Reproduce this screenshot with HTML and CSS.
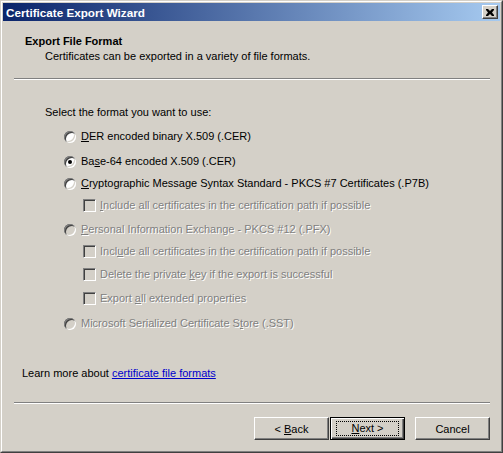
FILE: index.html
```html
<!DOCTYPE html>
<html>
<head>
<meta charset="utf-8">
<link rel="stylesheet" href="styles.css">
</head>
<body>
<div class="win">
  <div class="frame">
    <div class="titlebar">
      <span class="title">Certificate Export Wizard</span>
      <span class="close"><svg width="8" height="7" viewBox="0 0 8 7"><path d="M0 0h2l2 2 2-2h2v1l-2 2.5 2 2.5v1h-2l-2-2-2 2h-2v-1l2-2.5-2-2.5z" fill="#000"/></svg></span>
    </div>
    <div class="header">
      <div class="h-title">Export File Format</div>
      <div class="h-sub">Certificates can be exported in a variety of file formats.</div>
    </div>
    <div class="sep sep1"></div>
    <div class="body">
      <div class="prompt">Select the format you want to use:</div>
      <div class="opt radio r1">
        <span class="rb"></span><span class="lbl"><u>D</u>ER encoded binary X.509 (.CER)</span>
      </div>
      <div class="opt radio r2">
        <span class="rb checked"></span><span class="lbl">Ba<u>s</u>e-64 encoded X.509 (.CER)</span>
      </div>
      <div class="opt radio r3">
        <span class="rb"></span><span class="lbl"><u>C</u>ryptographic Message Syntax Standard - PKCS #7 Certificates (.P7B)</span>
      </div>
      <div class="opt check dis r4">
        <span class="cb"></span><span class="lbl"><u>I</u>nclude all certificates in the certification path if possible</span>
      </div>
      <div class="opt radio dis r5">
        <span class="rb"></span><span class="lbl"><u>P</u>ersonal Information Exchange - PKCS #12 (.PFX)</span>
      </div>
      <div class="opt check dis r6">
        <span class="cb"></span><span class="lbl">Incl<u>u</u>de all certificates in the certification path if possible</span>
      </div>
      <div class="opt check dis r7">
        <span class="cb"></span><span class="lbl">Delete the private <u>k</u>ey if the export is successful</span>
      </div>
      <div class="opt check dis r8">
        <span class="cb"></span><span class="lbl">Export <u>a</u>ll extended properties</span>
      </div>
      <div class="opt radio dis r9">
        <span class="rb"></span><span class="lbl">Microsoft Serialized Certificate S<u>t</u>ore (.SST)</span>
      </div>
      <div class="learn">Learn more about <a href="#">certificate file formats</a></div>
    </div>
    <div class="sep sep2"></div>
    <div class="buttons">
      <button class="btn">&lt; <u>B</u>ack</button>
      <button class="btn def"><span class="focus"><u>N</u>ext &gt;</span></button>
      <button class="btn cancel">Cancel</button>
    </div>
  </div>
</div>
</body>
</html>
```
FILE: styles.css
```css
* { box-sizing: border-box; }
html, body { margin: 0; padding: 0; background: #d4d0c8; }
body { font-family: "Liberation Sans", Arial, sans-serif; font-size: 11px; color: #000; }
.win {
  width: 503px; height: 453px;
  border: 1px solid; border-color: #d4d0c8 #404040 #404040 #d4d0c8;
}
.frame {
  height: 100%;
  border: 1px solid; border-color: #fff #808080 #808080 #fff;
  padding: 1px;
  background: #d4d0c8;
  display: flex; flex-direction: column;
}
.titlebar {
  height: 18px;
  background: linear-gradient(to right, #0a246a, #a6caf0);
  display: flex; align-items: center; justify-content: space-between;
  padding: 0 2px 0 2px;
}
.title { color: #fff; font-weight: bold; font-size: 11.7px; padding-left: 1px; }
.close {
  width: 16px; height: 14px;
  background: #d4d0c8;
  border: 1px solid; border-color: #fff #404040 #404040 #fff;
  box-shadow: inset -1px -1px 0 #808080;
  display: flex; align-items: center; justify-content: center;
  padding-right: 1px;
}
.close svg { display: block; }
.header { padding: 14px 0 0 22px; height: 57px; }
.h-title { font-weight: bold; line-height: 13px; }
.h-sub { line-height: 13px; margin-top: 2px; padding-left: 20px; }
.sep { height: 2px; border-top: 1px solid #808080; border-bottom: 1px solid #fff; margin: 0 10px 0 11px; }
.body { height: 322px; padding: 26px 0 0 42px; }
.prompt { line-height: 13px; }
.opt { display: flex; align-items: center; height: 13px; }
.r1 { margin-top: 11px; padding-left: 19px; }
.r2 { margin-top: 12px; padding-left: 19px; }
.r3 { margin-top: 9px; padding-left: 19px; }
.r4 { margin-top: 9px; padding-left: 38px; }
.r5 { margin-top: 11px; padding-left: 19px; }
.r6 { margin-top: 9px; padding-left: 38px; }
.r7 { margin-top: 10px; padding-left: 38px; }
.r8 { margin-top: 11px; padding-left: 38px; }
.r9 { margin-top: 12px; padding-left: 19px; }
.rb {
  width: 12px; height: 12px; border-radius: 50%;
  background: #fff; position: relative; flex: none;
  box-shadow: inset 1px 1px 0 #808080, inset -1px -1px 0 #fff, inset 2px 2px 0 #404040, inset -2px -2px 0 #d4d0c8;
}
.dis .rb { background: #d4d0c8; }
.rb.checked::after {
  content: ""; position: absolute; left: 4px; top: 4px; width: 4px; height: 4px; border-radius: 50%; background: #000;
}
.cb {
  width: 13px; height: 13px; flex: none;
  border: 1px solid; border-color: #808080 #fff #fff #808080;
  box-shadow: inset 1px 1px 0 #404040, inset -1px -1px 0 #d4d0c8;
  background: #fff;
}
.dis .cb { background: #d4d0c8; }
.lbl { margin-left: 5px; white-space: nowrap; line-height: 13px; }
.check .lbl { margin-left: 4px; }
.dis .lbl { color: #808080; text-shadow: 1px 1px 0 #fff; }
.learn { margin-top: 37px; margin-left: -23px; line-height: 13px; }
.learn a { color: #0000cc; }
.buttons { display: flex; justify-content: flex-end; padding: 13px 10px 0 0; gap: 0; }
.btn {
  width: 75px; height: 23px; padding: 0;
  font-family: inherit; font-size: 11px; color: #000;
  background: #d4d0c8;
  border: 1px solid; border-color: #fff #404040 #404040 #fff;
  box-shadow: inset -1px -1px 0 #808080;
}
.btn.def {
  margin-left: 1px;
  border: 1px solid #000;
  box-shadow: inset 1px 1px 0 #fff, inset -1px -1px 0 #404040, inset -2px -2px 0 #808080;
  display: flex; align-items: center; justify-content: center;
}
.focus { display: block; width: 63px; height: 15px; line-height: 13px; border: 1px dotted #000; }
.cancel { margin-left: 10px; }
```
